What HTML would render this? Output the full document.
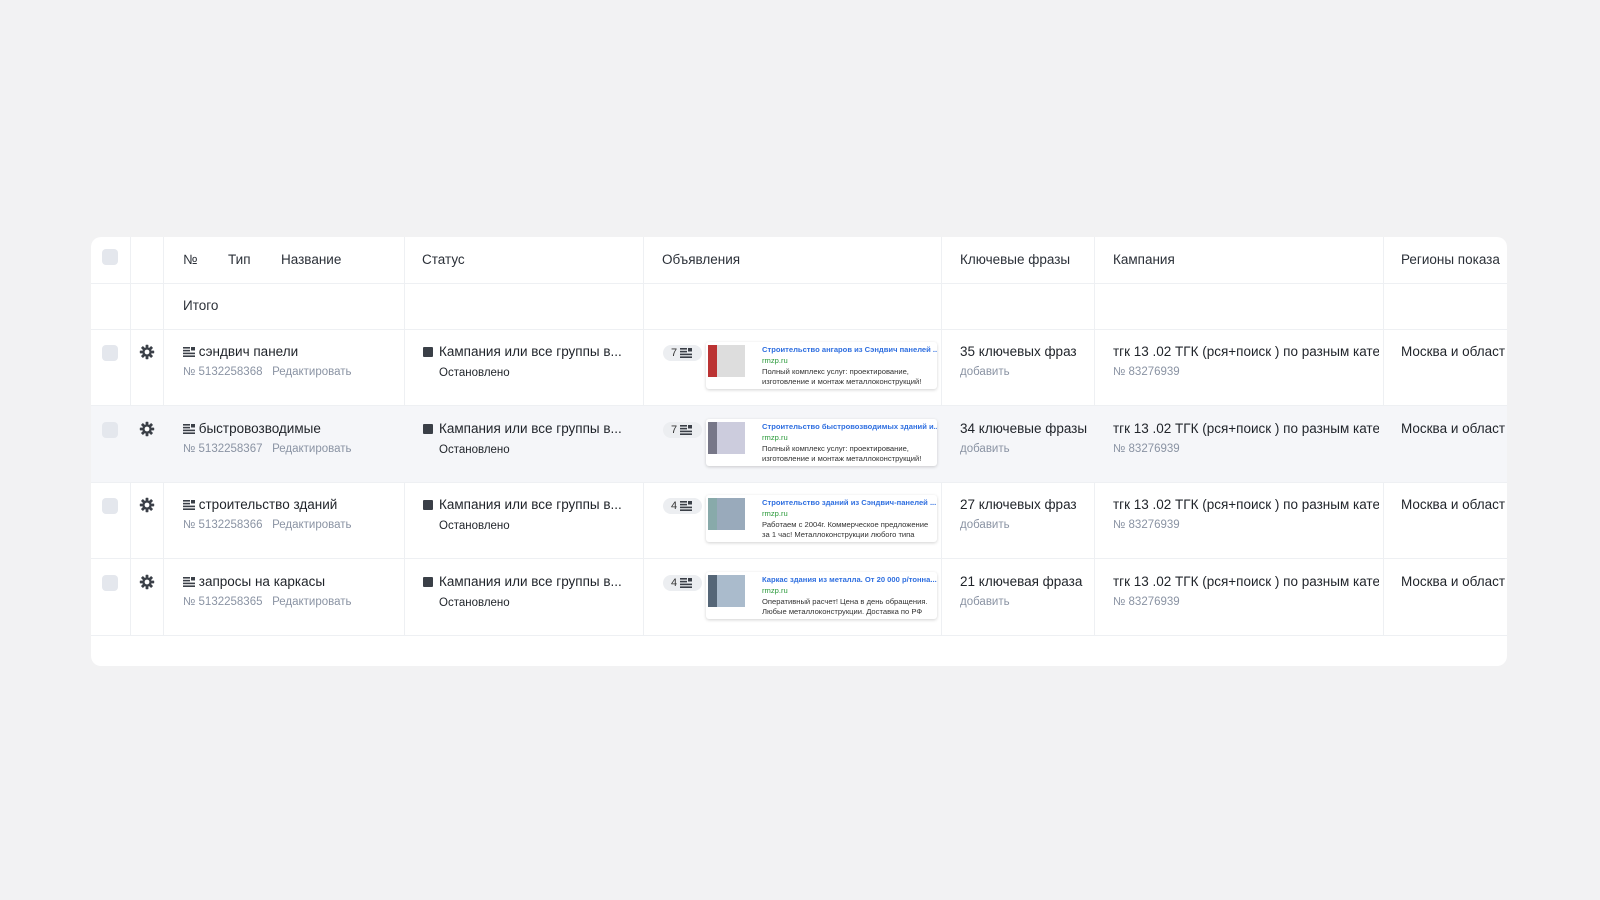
<!DOCTYPE html>
<html><head><meta charset="utf-8"><style>
*{margin:0;padding:0;box-sizing:border-box}
body{width:1600px;height:900px;background:#f2f2f3;font-family:"Liberation Sans",sans-serif;color:#1f2329;position:relative;overflow:hidden}
.t{position:absolute;left:91px;top:237px;width:1416px;height:429px;background:#fff;border-radius:10px;overflow:hidden}
.a{position:absolute;white-space:nowrap}
.vl{position:absolute;top:0;width:1px;height:398px;background:#eef0f3}
.hl{position:absolute;left:0;width:1416px;height:1px;background:#eef0f3}
.h{font-size:13.5px;color:#2b3038;top:15px;line-height:16px}
.cb{position:absolute;width:16px;height:16px;border-radius:4px;background:#e4e7ed}
.m{font-size:13.5px;line-height:16px}
.s{font-size:11.5px;color:#8a93a3;line-height:14px}
.card{position:absolute;width:231px;height:47px;background:#fff;border-radius:3px;box-shadow:0 1px 3px rgba(0,0,0,.18);overflow:hidden}
.card .th{position:absolute;left:2px;top:3px;width:37px;height:32px}
.card .ct{position:absolute;left:56px;font-size:7.6px;white-space:nowrap;line-height:9px}
.pill{position:absolute;width:39px;height:16px;border-radius:8px;background:#eceef1;font-size:11px;line-height:16px;padding-left:8px;color:#333}
.ic{display:inline-block;vertical-align:middle}
</style></head><body>
<div class="t">
<div class="vl" style="left:39px"></div><div class="vl" style="left:72px"></div><div class="vl" style="left:313px"></div><div class="vl" style="left:552px"></div><div class="vl" style="left:850px"></div><div class="vl" style="left:1003px"></div><div class="vl" style="left:1292px"></div>
<div class="hl" style="top:46px"></div><div class="hl" style="top:92px"></div><div class="hl" style="top:168px"></div><div class="hl" style="top:245px"></div><div class="hl" style="top:321px"></div><div class="hl" style="top:398px"></div>
<div style="position:absolute;left:0;top:169px;width:1416px;height:76px;background:#f5f6f9"></div>
<div class="cb" style="left:11px;top:12px"></div>
<div class="a h" style="left:92px">№</div><div class="a h" style="left:137px">Тип</div><div class="a h" style="left:190px">Название</div>
<div class="a h" style="left:331px">Статус</div><div class="a h" style="left:571px">Объявления</div>
<div class="a h" style="left:869px">Ключевые фразы</div><div class="a h" style="left:1022px">Кампания</div><div class="a h" style="left:1310px">Регионы показа</div>
<div class="a h" style="left:92px;top:61px">Итого</div>
</div>
<div id="rows"></div>
<script>
const R=[
["сэндвич панели","5132258368","7","Строительство ангаров из Сэндвич панелей ...","Полный комплекс услуг: проектирование,","изготовление и монтаж металлоконструкций!","35 ключевых фраз","#b33","#ddd"],
["быстровозводимые","5132258367","7","Строительство быстровозводимых зданий и...","Полный комплекс услуг: проектирование,","изготовление и монтаж металлоконструкций!","34 ключевые фразы","#778","#ccd"],
["строительство зданий","5132258366","4","Строительство зданий из Сэндвич-панелей ...","Работаем с 2004г. Коммерческое предложение","за 1 час! Металлоконструкции любого типа","27 ключевых фраз","#8aa","#9ab"],
["запросы на каркасы","5132258365","4","Каркас здания из металла. От 20 000 р/тонна...","Оперативный расчет! Цена в день обращения.","Любые металлоконструкции. Доставка по РФ","21 ключевая фраза","#567","#abc"]];
const tops=[330,407,483,560];let h='';
const gear='<svg width="16" height="16" viewBox="0 0 16 16"><g fill="#3a3f47"><circle cx="8" cy="8" r="4.6"/>'+[0,45,90,135].map(a=>`<rect x="6.6" y="0.8" width="2.8" height="14.4" rx="0.6" transform="rotate(${a} 8 8)"/>`).join('')+'</g><circle cx="8" cy="8" r="2.4" fill="#fff"/></svg>';
const lst='<svg class="ic" width="12" height="10" viewBox="0 0 12 10"><g fill="#3a3f47"><rect x="0" y="0" width="7" height="1.6"/><rect x="8" y="0" width="4" height="3.5"/><rect x="0" y="2.8" width="7" height="1.6"/><rect x="0" y="5.6" width="12" height="1.6"/><rect x="0" y="8.4" width="12" height="1.6"/></g></svg>';
R.forEach((r,i)=>{const T=tops[i];
h+=`<div class="cb" style="left:102px;top:${T+15}px"></div>
<div class="a" style="left:139px;top:${T+14}px">${gear}</div>
<div class="a m" style="left:183px;top:${T+14}px">${lst} ${r[0]}</div>
<div class="a s" style="left:183px;top:${T+35}px">№ ${r[1]}&nbsp;&nbsp;&nbsp;Редактировать</div>
<div class="a" style="left:423px;top:${T+17}px;width:10px;height:10px;background:#3a3f47;border-radius:1px"></div>
<div class="a m" style="left:439px;top:${T+14}px">Кампания или все группы в...</div>
<div class="a m" style="left:439px;top:${T+35}px;font-size:11.5px">Остановлено</div>
<div class="pill" style="left:663px;top:${T+15}px">${r[2]} ${lst}</div>
<div class="card" style="left:706px;top:${T+12}px"><div class="th" style="background:linear-gradient(90deg,${r[7]} 0 25%,${r[8]} 25%)"></div>
<div class="ct" style="top:3px;color:#2f6fe0;font-weight:bold">${r[3]}</div>
<div class="ct" style="top:14px;color:#2a9a3a">rmzp.ru</div>
<div class="ct" style="top:25px;color:#333">${r[4]}</div>
<div class="ct" style="top:35px;color:#333">${r[5]}</div></div>
<div class="a m" style="left:960px;top:${T+14}px">${r[6]}</div>
<div class="a s" style="left:960px;top:${T+35}px">добавить</div>
<div class="a m" style="left:1113px;top:${T+14}px;width:266px;overflow:hidden">тгк 13 .02 ТГК (рся+поиск ) по разным категориям</div>
<div class="a s" style="left:1113px;top:${T+35}px">№ 83276939</div>
<div class="a m" style="left:1401px;top:${T+14}px;width:105px;overflow:hidden">Москва и область</div>`;});
document.getElementById('rows').innerHTML=h;
</script>
</body></html>
